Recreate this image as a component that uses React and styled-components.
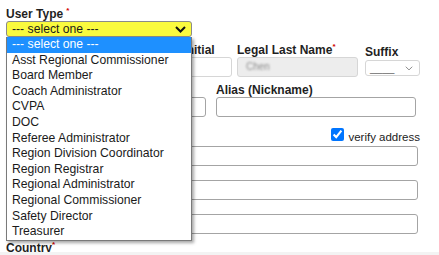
import React from "react";
import styled, { createGlobalStyle } from "styled-components";

const Global = createGlobalStyle`
  html, body { margin: 0; padding: 0; background: #f3f3f3; }
  body { font-family: "Liberation Sans", Arial, sans-serif; }
`;

const Card = styled.div`
  position: relative;
  box-sizing: border-box;
  width: 439px;
  height: 252px;
  padding: 7px 0 0 6px;
  background: #fff;
  color: #222;
`;

const Label = styled.div`
  font: bold 12px/14px "Liberation Sans", Arial, sans-serif;
  color: #1f1f1f;
  white-space: nowrap;
  padding-top: ${(p) => p.$offset || 0}px;
  margin-top: ${(p) => p.$mt || 0}px;
  min-height: 14px;
`;

const Req = styled.span`
  color: #d10000;
  font-size: 8px;
  line-height: 8px;
  vertical-align: top;
  margin-left: ${(p) => (p.$gap ? 3 : 0)}px;
`;

const UserTypeField = styled.div`
  position: relative;
  width: 186px;
`;

const SelectBox = styled.div`
  box-sizing: border-box;
  height: 16px;
  display: flex;
  align-items: center;
  justify-content: space-between;
  padding: 0 5px;
  background: #fafa3e;
  border: 1px solid #8a8a8a;
  border-radius: 3px;
  font: 12.2px/14px "Liberation Sans", Arial, sans-serif;
  color: #1a1a1a;
`;

const List = styled.ul`
  position: absolute;
  top: 100%;
  left: 0;
  z-index: 5;
  box-sizing: border-box;
  width: 186px;
  margin: 0;
  padding: 0;
  list-style: none;
  background: #fff;
  border: 1px solid #7a7a7a;
  border-top: none;
  box-shadow: 2px 2px 3px rgba(0, 0, 0, 0.35);
`;

const Option = styled.li`
  height: 15.6px;
  padding-left: 5px;
  font: 12.2px/15.6px "Liberation Sans", Arial, sans-serif;
  white-space: nowrap;
  color: ${(p) => (p.$active ? "#fff" : "#1a1a1a")};
  background: ${(p) => (p.$active ? "#1e90ff" : "transparent")};
`;

const Row = styled.div`
  display: flex;
  align-items: flex-start;
  margin-top: ${(p) => p.$mt || 0}px;
`;

const Field = styled.div`
  width: ${(p) => p.$w}px;
  margin-left: ${(p) => p.$ml || 0}px;
  flex: none;
`;

const Input = styled.div`
  box-sizing: border-box;
  width: ${(p) => (p.$w ? `${p.$w}px` : "100%")};
  height: 20px;
  display: flex;
  align-items: center;
  padding-left: 8px;
  border: 1px solid ${(p) => (p.$light ? "#d6d6d6" : "#a4a4a4")};
  border-radius: 3px;
  background: ${(p) => (p.$disabled ? "#ededed" : "#fff")};
`;

const Blurred = styled.span`
  font: 10px/12px "Liberation Sans", Arial, sans-serif;
  color: #8c8c8c;
  filter: blur(1px);
`;

const SmallSelect = styled.div`
  box-sizing: border-box;
  height: 16px;
  margin-top: 1px;
  display: flex;
  align-items: center;
  justify-content: space-between;
  padding: 0 6px 0 4px;
  border: 1px solid #d6d6d6;
  border-radius: 3px;
  background: #fff;
  font: 11px/12px "Liberation Sans", Arial, sans-serif;
  color: #666;
`;

const VerifyRow = styled.div`
  box-sizing: border-box;
  width: 414px;
  height: 29px;
  display: flex;
  align-items: flex-end;
  justify-content: flex-end;
  padding-bottom: 5px;
`;

const CheckLabel = styled.label`
  display: flex;
  align-items: flex-end;
`;

const Check = styled.input`
  width: 13px;
  height: 13px;
  margin: 0;
  accent-color: #0075ff;
`;

const CheckText = styled.span`
  margin-left: 4px;
  margin-bottom: -2px;
  font: 11.5px/11px "Liberation Sans", Arial, sans-serif;
  color: #222;
`;

const Spacer = styled.div`
  height: 14px;
`;

const Chevron = ({ color = "#111", w = 11, h = 7, sw = 2 }) => (
  <svg width={w} height={h} viewBox="0 0 11 7" fill="none">
    <polyline points="1,1 5.5,5.5 10,1" stroke={color} strokeWidth={sw} />
  </svg>
);

const options = [
  "--- select one ---",
  "Asst Regional Commissioner",
  "Board Member",
  "Coach Administrator",
  "CVPA",
  "DOC",
  "Referee Administrator",
  "Region Division Coordinator",
  "Region Registrar",
  "Regional Administrator",
  "Regional Commissioner",
  "Safety Director",
  "Treasurer",
];

export default function App() {
  return (
    <>
      <Global />
      <Card>
        <UserTypeField>
          <Label>
            User Type<Req $gap>*</Req>
          </Label>
          <SelectBox>
            <span>--- select one ---</span>
            <Chevron />
          </SelectBox>
          <List>
            {options.map((o, i) => (
              <Option key={o} $active={i === 0}>
                {o}
              </Option>
            ))}
          </List>
        </UserTypeField>

        <Row $mt={6}>
          <Field $w={130}>
            <Spacer />
            <Input />
          </Field>
          <Field $w={90} $ml={6}>
            <Label>Middle Initial</Label>
            <Input $light />
          </Field>
          <Field $w={121} $ml={5}>
            <Label>
              Legal Last Name<Req>*</Req>
            </Label>
            <Input $light $disabled>
              <Blurred>Chen</Blurred>
            </Input>
          </Field>
          <Field $w={55} $ml={7}>
            <Label $offset={2}>Suffix</Label>
            <SmallSelect>
              <span>____</span>
              <Chevron color="#8a8a8a" w={8} h={5} sw={1.4} />
            </SmallSelect>
          </Field>
        </Row>

        <Row $mt={6}>
          <Field $w={200}>
            <Spacer />
            <Input />
          </Field>
          <Field $w={200} $ml={10}>
            <Label>Alias (Nickname)</Label>
            <Input />
          </Field>
        </Row>

        <VerifyRow>
          <CheckLabel>
            <Check type="checkbox" defaultChecked />
            <CheckText>verify address</CheckText>
          </CheckLabel>
        </VerifyRow>
        <Input $w={412} />
        <Spacer />
        <Input $w={412} />
        <Spacer />
        <Input $w={412} />
        <Label $mt={7}>
          Country<Req>*</Req>
        </Label>
      </Card>
    </>
  );
}
